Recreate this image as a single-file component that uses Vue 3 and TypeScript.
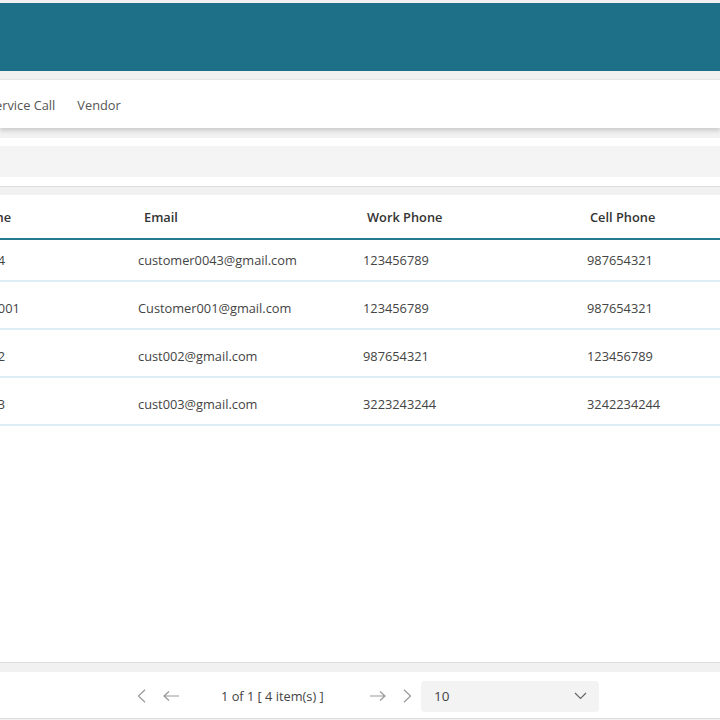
<script setup lang="ts">
interface Row {
  name: string
  email: string
  work: string
  cell: string
}

const rows: Row[] = [
  { name: 'Customer 4', email: 'customer0043@gmail.com', work: '123456789', cell: '987654321' },
  { name: 'Customer 001', email: 'Customer001@gmail.com', work: '123456789', cell: '987654321' },
  { name: 'Customer 2', email: 'cust002@gmail.com', work: '987654321', cell: '123456789' },
  { name: 'Customer 3', email: 'cust003@gmail.com', work: '3223243244', cell: '3242234244' },
]
</script>

<template>
  <div class="page">
    <header class="banner"></header>

    <nav class="tabs">
      <span class="tab tab-service">Service Call</span>
      <span class="tab">Vendor</span>
    </nav>

    <section class="filter">
      <div class="filter-bar"></div>
    </section>

    <section class="table">
      <div class="thead">
        <div class="th th-name"><span>Name</span></div>
        <div class="th">Email</div>
        <div class="th">Work Phone</div>
        <div class="th">Cell Phone</div>
      </div>
      <div v-for="row in rows" :key="row.email" class="tr">
        <div class="td td-name"><span>{{ row.name }}</span></div>
        <div class="td">{{ row.email }}</div>
        <div class="td">{{ row.work }}</div>
        <div class="td">{{ row.cell }}</div>
      </div>
    </section>

    <footer class="pager">
      <div class="pager-group">
        <svg class="ico" width="9" height="14" viewBox="0 0 9 14"><path d="M8 .8 1.5 7 8 13.2" /></svg>
        <svg class="ico" width="16" height="10" viewBox="0 0 16 10"><path d="M16 5H1M6 .5 1 5l5 4.5" /></svg>
      </div>
      <span class="pager-text">1 of 1 [ 4 item(s) ]</span>
      <div class="pager-group">
        <svg class="ico" width="16" height="10" viewBox="0 0 16 10"><path d="M0 5h15M10 .5 15 5l-5 4.5" /></svg>
        <svg class="ico" width="9" height="14" viewBox="0 0 9 14"><path d="M1 .8 7.5 7 1 13.2" /></svg>
      </div>
      <div class="select">
        <span>10</span>
        <svg class="chev" width="13" height="8" viewBox="0 0 13 8"><path d="M1 1l5.5 5.5L12 1" /></svg>
      </div>
    </footer>
  </div>
</template>

<style>
html,
body {
  margin: 0;
  background: #fff;
}
</style>

<style scoped>
.page {
  width: 720px;
  height: 720px;
  overflow: hidden;
  display: flex;
  flex-direction: column;
  background: #f1f1f1;
  color: #444;
  font-family: "Open Sans", "Noto Sans", sans-serif;
  font-size: 12.8px;
}

.banner {
  height: 68px;
  margin-top: 3px;
  background: #1e7088;
  flex: none;
}

.tabs {
  height: 49px;
  margin-top: 8px;
  display: flex;
  align-items: center;
  gap: 22px;
  padding-top: 1px;
  flex: none;
  background: #fff;
  box-shadow: 0 3px 4px rgba(0, 0, 0, 0.14);
  position: relative;
  border-top: 1px solid #e6e6e6;
  box-sizing: border-box;
}

.tab {
  color: #555;
  white-space: nowrap;
}

.tab-service {
  margin-left: -12px;
}

.filter {
  margin-top: 10px;
  padding: 8px 0 9px;
  flex: none;
  background: #fff;
  border-bottom: 1px solid #ddd;
}

.filter-bar {
  height: 31px;
  background: #f4f4f4;
}

.table {
  margin-top: 8px;
  flex: 1;
  min-height: 0;
  background: #fff;
  border-bottom: 1px solid #ddd;
}

.thead {
  display: grid;
  grid-template-columns: 144px 223px 223px 1fr;
  height: 43px;
  align-items: center;
  border-bottom: 2px solid #267a90;
}

.th {
  color: #333;
  font-weight: 600;
  white-space: nowrap;
}

.th-name,
.td-name {
  overflow: hidden;
}

.th-name span {
  display: block;
  margin-left: -26px;
}

.tr {
  display: grid;
  grid-template-columns: 138px 225px 224px 1fr;
  height: 48px;
  padding-top: 6px;
  box-sizing: border-box;
  align-items: center;
  border-bottom: 2px solid #dcedf5;
}

.tr:nth-child(2) {
  height: 42px;
  padding-top: 0;
}

.td {
  white-space: nowrap;
}

.td-name span {
  display: block;
  margin-left: -64px;
}

.pager {
  height: 47px;
  margin-top: 9px;
  margin-bottom: 1px;
  padding-top: 2px;
  padding-left: 137px;
  box-sizing: border-box;
  display: flex;
  align-items: center;
  flex: none;
  background: #fff;
  border-bottom: 1px solid #ddd;
}

.pager-group {
  display: flex;
  align-items: center;
  gap: 17px;
}

.pager-text {
  margin-left: 42px;
  width: 149px;
  white-space: nowrap;
}

.select {
  margin-left: 9px;
  width: 178px;
  height: 31px;
  background: #f3f3f3;
  border-radius: 4px;
  display: flex;
  align-items: center;
  justify-content: space-between;
  padding: 0 12px 0 13px;
  box-sizing: border-box;
  font-size: 13.5px;
}

.ico path {
  fill: none;
  stroke: #999;
  stroke-width: 1.2;
}

.chev path {
  fill: none;
  stroke: #666;
  stroke-width: 1.2;
}
</style>
